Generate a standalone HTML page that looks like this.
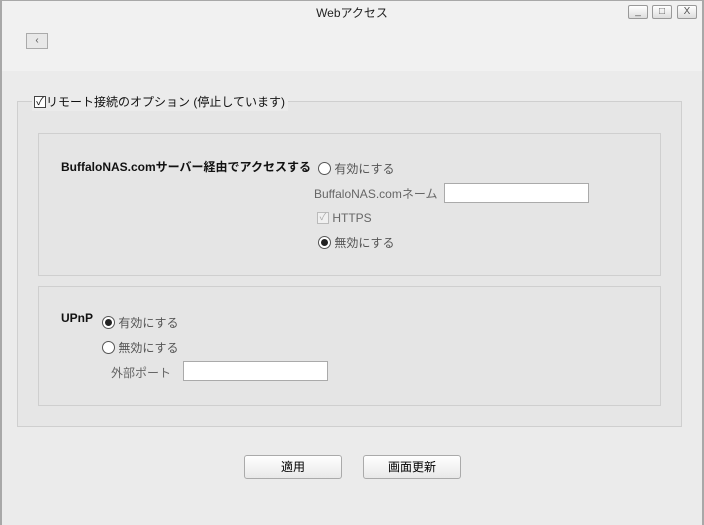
<!DOCTYPE html>
<html><head><meta charset="utf-8"><style>
*{box-sizing:border-box;margin:0;padding:0}
body{width:704px;height:525px;background:#ebebeb;font-family:"Liberation Sans","Noto Sans CJK JP",sans-serif;font-size:12px;color:#333;position:relative;overflow:hidden}
.abs{position:absolute}
#win{position:absolute;left:0;top:0;width:704px;height:525px;border-left:2px solid #a8a8a8;border-right:2px solid #a8a8a8;border-top:1px solid #a8a8a8}
#hdr{left:2px;top:1px;width:700px;height:70px;background:#f1f1f1}
.wb{top:5px;width:20px;height:14px;border:1px solid #999;background:linear-gradient(#fff,#ddd);border-radius:2px;font-size:10px;text-align:center;line-height:12px;color:#555}
.box{background:#e5e5e5;border:1px solid #cfcfcf}
.radio{display:inline-block;width:13px;height:13px;border:1px solid #555;border-radius:50%;background:#fff;vertical-align:-2px;position:relative}
.radio.on::after{content:"";position:absolute;left:2px;top:2px;width:7px;height:7px;border-radius:50%;background:#222}
.inp{background:#fff;border:1px solid #aaa}
.btn{top:455px;width:98px;height:24px;border:1px solid #aaa;border-radius:3px;background:linear-gradient(#fff,#e8e8e8);text-align:center;line-height:22px;color:#000;font-size:12px}
.cb{display:inline-block;width:12px;height:12px;vertical-align:middle;position:relative;top:-1px}
</style></head><body>
<div id="win"></div>
<div class="abs" id="hdr"></div>
<div class="abs" style="left:0;top:4px;width:704px;text-align:center;font-size:12px;color:#222">Webアクセス</div>
<div class="abs wb" style="left:628px">_</div>
<div class="abs wb" style="left:652px">□</div>
<div class="abs wb" style="left:677px">X</div>
<div class="abs" style="left:26px;top:33px;width:22px;height:16px;border:1px solid #aaa;background:#e8e8e8;font-size:10px;text-align:center;line-height:14px;color:#555">‹</div>
<div class="abs box" style="left:17px;top:101px;width:665px;height:326px;background:#e6e6e6"></div>
<div class="abs" style="left:32px;top:93px;background:#ebebeb;padding:0 3px 0 2px;font-size:12px;color:#111;height:18px;line-height:18px;white-space:nowrap">
<span class="cb" style="border:1px solid #444;background:#fff;font-size:11px;line-height:10px;text-align:center">✓</span>リモート接続のオプション (停止しています)</div>
<div class="abs box" style="left:38px;top:133px;width:623px;height:143px"></div>
<div class="abs" style="left:61px;top:158px;font-weight:bold;color:#111">BuffaloNAS.comサーバー経由でアクセスする</div>
<div class="abs" style="left:318px;top:160px;color:#555"><span class="radio"></span> 有効にする</div>
<div class="abs" style="left:314px;top:185px;color:#666">BuffaloNAS.comネーム</div>
<div class="abs inp" style="left:444px;top:183px;width:145px;height:20px"></div>
<div class="abs" style="left:317px;top:210px;color:#666;line-height:16px"><span class="cb" style="border:1px solid #bbb;background:#f0f0f0;font-size:10px;line-height:10px;text-align:center;color:#aaa">✓</span> HTTPS</div>
<div class="abs" style="left:318px;top:234px;color:#555"><span class="radio on"></span> 無効にする</div>
<div class="abs box" style="left:38px;top:286px;width:623px;height:120px"></div>
<div class="abs" style="left:61px;top:311px;font-weight:bold;color:#111">UPnP</div>
<div class="abs" style="left:102px;top:314px;color:#555"><span class="radio on"></span> 有効にする</div>
<div class="abs" style="left:102px;top:339px;color:#555"><span class="radio"></span> 無効にする</div>
<div class="abs" style="left:111px;top:364px;color:#666">外部ポート</div>
<div class="abs inp" style="left:183px;top:361px;width:145px;height:20px"></div>
<div class="abs btn" style="left:244px">適用</div>
<div class="abs btn" style="left:363px">画面更新</div>
</body></html>
